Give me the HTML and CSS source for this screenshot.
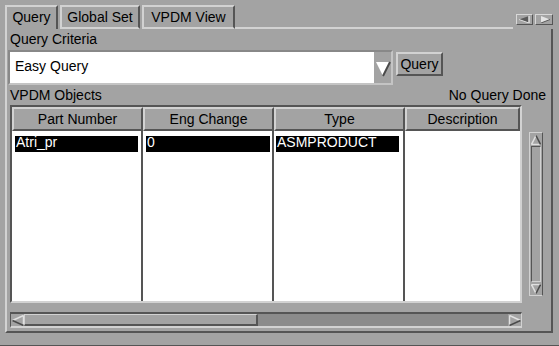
FILE: index.html
```html
<!DOCTYPE html>
<html>
<head>
    <meta name="viewport" content="width=device-width, initial-scale=1.0">
    <title>VPDM Query</title>
    <link rel="stylesheet" href="styles.css">
</head>
<body>
<div class="window">
    <div class="tabbar">
        <div class="tab active tab-query">Query</div>
        <div class="tab tab-global">Global Set</div>
        <div class="tab tab-vpdm">VPDM View</div>
        <div class="tab-line"></div>
        <div class="tab-arrows">
            <div class="tab-arrow">
                <svg width="13" height="7" viewBox="0 0 13 7">
                    <polygon points="1,3.5 11,0 11,7" fill="#5a5a5a"/>
                    <line x1="11" y1="0" x2="11" y2="7" stroke="#e0e0e0" stroke-width="1.5"/>
                    <line x1="1" y1="3.5" x2="11" y2="7" stroke="#e0e0e0" stroke-width="1"/>
                </svg>
            </div>
            <div class="tab-arrow">
                <svg width="13" height="7" viewBox="0 0 13 7">
                    <polygon points="3,0 12,3.5 3,7" fill="#e4e4e4"/>
                    <line x1="3" y1="7" x2="12" y2="3.5" stroke="#5a5a5a" stroke-width="1"/>
                </svg>
            </div>
        </div>
    </div>

    <div class="panel">
        <div class="label">Query Criteria</div>

        <div class="criteria-row">
            <div class="combo">
                <div class="combo-field">Easy Query</div>
                <div class="combo-arrow">
                    <svg width="16" height="16" viewBox="0 0 16 16">
                        <polygon points="1,1 15,1 8,15" fill="#ffffff"/>
                        <line x1="15" y1="1" x2="8" y2="15" stroke="#4a4a4a" stroke-width="2"/>
                    </svg>
                </div>
            </div>
            <button class="btn">Query</button>
        </div>

        <div class="objects-head">
            <span>VPDM Objects</span>
            <span>No Query Done</span>
        </div>

        <div class="objects">
            <div class="table">
                <div class="col col-1">
                    <div class="th">Part Number</div>
                    <div class="td"><div class="cell sel">Atri_pr</div></div>
                </div>
                <div class="col col-2">
                    <div class="th">Eng Change</div>
                    <div class="td"><div class="cell sel">0</div></div>
                </div>
                <div class="col col-3">
                    <div class="th">Type</div>
                    <div class="td"><div class="cell sel">ASMPRODUCT</div></div>
                </div>
                <div class="col col-4">
                    <div class="th">Description</div>
                    <div class="td"></div>
                </div>
            </div>

            <div class="vscroll">
                <div class="varrow">
                    <svg width="10" height="10" viewBox="0 0 10 10">
                        <line x1="5" y1="0.5" x2="0.5" y2="9.5" stroke="#e0e0e0" stroke-width="1.5"/>
                        <line x1="0.5" y1="9.5" x2="9.5" y2="9.5" stroke="#e0e0e0" stroke-width="1.5"/>
                        <line x1="5" y1="0.5" x2="9.5" y2="9.5" stroke="#4a4a4a" stroke-width="1.5"/>
                    </svg>
                </div>
                <div class="vthumb"></div>
                <div class="varrow">
                    <svg width="10" height="10" viewBox="0 0 10 10">
                        <line x1="0.5" y1="0.5" x2="9.5" y2="0.5" stroke="#e0e0e0" stroke-width="1.5"/>
                        <line x1="0.5" y1="0.5" x2="5" y2="9.5" stroke="#e0e0e0" stroke-width="1.5"/>
                        <line x1="9.5" y1="0.5" x2="5" y2="9.5" stroke="#4a4a4a" stroke-width="1.5"/>
                    </svg>
                </div>
            </div>
        </div>

        <div class="hscroll">
            <div class="harrow">
                <svg width="12" height="11" viewBox="0 0 12 11">
                    <line x1="0.5" y1="5.5" x2="11.5" y2="0.5" stroke="#e0e0e0" stroke-width="1.5"/>
                    <line x1="11.5" y1="0.5" x2="11.5" y2="10.5" stroke="#e0e0e0" stroke-width="1.5"/>
                    <line x1="0.5" y1="5.5" x2="11.5" y2="10.5" stroke="#4a4a4a" stroke-width="1.5"/>
                </svg>
            </div>
            <div class="hthumb"></div>
            <div class="htrough"></div>
            <div class="harrow">
                <svg width="12" height="11" viewBox="0 0 12 11">
                    <line x1="0.5" y1="0.5" x2="11.5" y2="5.5" stroke="#e0e0e0" stroke-width="1.5"/>
                    <line x1="0.5" y1="0.5" x2="0.5" y2="10.5" stroke="#e0e0e0" stroke-width="1.5"/>
                    <line x1="0.5" y1="10.5" x2="11.5" y2="5.5" stroke="#4a4a4a" stroke-width="1.5"/>
                </svg>
            </div>
        </div>
    </div>
</div>
</body>
</html>
```

FILE: styles.css
```css
body {
    margin: 0;
    padding: 0;
    background-color: #a3a3a3;
    font-family: "Liberation Sans", Arial, sans-serif;
    font-size: 14px;
    color: #000;
}

.window {
    width: 559px;
    height: 346px;
    box-sizing: border-box;
    border-bottom: 1px solid #555;
    overflow: hidden;
}

/* tabs */

.tabbar {
    display: flex;
    align-items: flex-end;
    height: 29px;
    padding-left: 5px;
    padding-right: 6px;
}

.tab {
    height: 24px;
    box-sizing: border-box;
    border-top: 2px solid #d2d2d2;
    border-left: 2px solid #d2d2d2;
    border-right: 2px solid #555;
    border-bottom: 2px solid #d2d2d2;
    line-height: 20px;
    text-align: center;
    margin-right: 2px;
}

.tab.active {
    border-bottom: none;
}

.tab-query { width: 53px; }
.tab-global { width: 80px; }
.tab-vpdm { width: 93px; margin-right: 0; }

.tab-line {
    flex: 1;
    height: 0;
    border-bottom: 2px solid #d2d2d2;
}

.tab-arrows {
    display: flex;
    gap: 2px;
    margin: 0 0 4px 3px;
}

.tab-arrow {
    width: 17px;
    height: 11px;
    box-sizing: border-box;
    border-top: 1px solid #d8d8d8;
    border-left: 1px solid #d8d8d8;
    border-right: 1px solid #555;
    border-bottom: 1px solid #555;
    display: flex;
    align-items: center;
    justify-content: center;
}

.tab-arrow + .tab-arrow {
    width: 18px;
}

/* main panel */

.panel {
    margin-left: 5px;
    width: 548px;
    height: 304px;
    box-sizing: border-box;
    border-left: 2px solid #d2d2d2;
    border-right: 2px solid #555;
    border-bottom: 2px solid #555;
    padding: 0 5px 0 3px;
}

.label {
    line-height: 20px;
    height: 20px;
}

.criteria-row {
    display: flex;
    align-items: flex-start;
    margin-top: 1px;
}

.combo {
    display: flex;
    margin-left: -2px;
    width: 385px;
    height: 35px;
    box-sizing: border-box;
    border-top: 2px solid #888;
    border-left: 2px solid #888;
    border-bottom: 2px solid #c4c4c4;
    border-right: 2px solid #c4c4c4;
}

.combo-field {
    flex: 1;
    background-color: #fff;
    padding: 4px 5px 0;
    line-height: 20px;
}

.combo-arrow {
    width: 17px;
    display: flex;
    align-items: center;
    justify-content: center;
    padding-top: 3px;
}

.btn {
    margin: 2px 0 0 3px;
    width: 47px;
    height: 24px;
    box-sizing: border-box;
    padding: 0;
    background-color: #a3a3a3;
    font-family: inherit;
    font-size: 14px;
    line-height: 18px;
    color: #000;
    border-top: 2px solid #d2d2d2;
    border-left: 2px solid #d2d2d2;
    border-right: 2px solid #555;
    border-bottom: 2px solid #555;
}

.objects-head {
    display: flex;
    justify-content: space-between;
    line-height: 20px;
    height: 20px;
}

/* table */

.objects {
    display: flex;
    align-items: flex-start;
}

.table {
    display: flex;
    width: 512px;
    height: 198px;
    box-sizing: border-box;
    border-top: 2px solid #555;
    border-left: 2px solid #555;
    border-bottom: 2px solid #d2d2d2;
    border-right: 2px solid #d2d2d2;
}

.col {
    display: flex;
    flex-direction: column;
}

.col-1, .col-2, .col-3 { width: 131px; }
.col-4 { width: 115px; }

.th {
    height: 24px;
    box-sizing: border-box;
    border-top: 2px solid #d2d2d2;
    border-left: 2px solid #d2d2d2;
    border-right: 2px solid #555;
    border-bottom: 2px solid #555;
    text-align: center;
    line-height: 20px;
}

.td {
    flex: 1;
    background-color: #fff;
    padding: 5px 3px 0;
}

.col-1 .td, .col-2 .td, .col-3 .td {
    border-right: 2px solid #555;
}

.col-2 .td { padding-right: 2px; }
.col-3 .td { padding-left: 2px; padding-right: 4px; }

.cell {
    height: 16px;
    line-height: 13px;
    padding-left: 1px;
}

.cell.sel {
    background-color: #000;
    color: #fff;
}

/* scrollbars */

.vscroll {
    display: flex;
    flex-direction: column;
    margin: 27px 0 0 7px;
    width: 14px;
    height: 164px;
    box-sizing: border-box;
    border-left: 1px solid #d2d2d2;
    border-top: 1px solid #d2d2d2;
    border-right: 1px solid #555;
    border-bottom: 1px solid #d2d2d2;
}

.varrow {
    height: 13px;
    display: flex;
    align-items: center;
    justify-content: center;
}

.vthumb {
    flex: 1;
    border-left: 1px solid #555;
    border-top: 1px solid #555;
    border-right: 1px solid #d2d2d2;
    border-bottom: 1px solid #d2d2d2;
    margin: 0 1px;
}

.hscroll {
    display: flex;
    margin-top: 9px;
    width: 512px;
    height: 16px;
    box-sizing: border-box;
    border-top: 2px solid #555;
    border-left: 1px solid #555;
    border-bottom: 2px solid #d2d2d2;
    border-right: 1px solid #d2d2d2;
    background-color: #8b8b8b;
}

.harrow {
    width: 13px;
    background-color: #a3a3a3;
    display: flex;
    align-items: center;
    justify-content: center;
}

.hthumb {
    width: 234px;
    box-sizing: border-box;
    background-color: #a3a3a3;
    border-top: 1px solid #d2d2d2;
    border-left: 1px solid #d2d2d2;
    border-right: 2px solid #555;
    border-bottom: 2px solid #555;
}

.htrough {
    flex: 1;
}
```
